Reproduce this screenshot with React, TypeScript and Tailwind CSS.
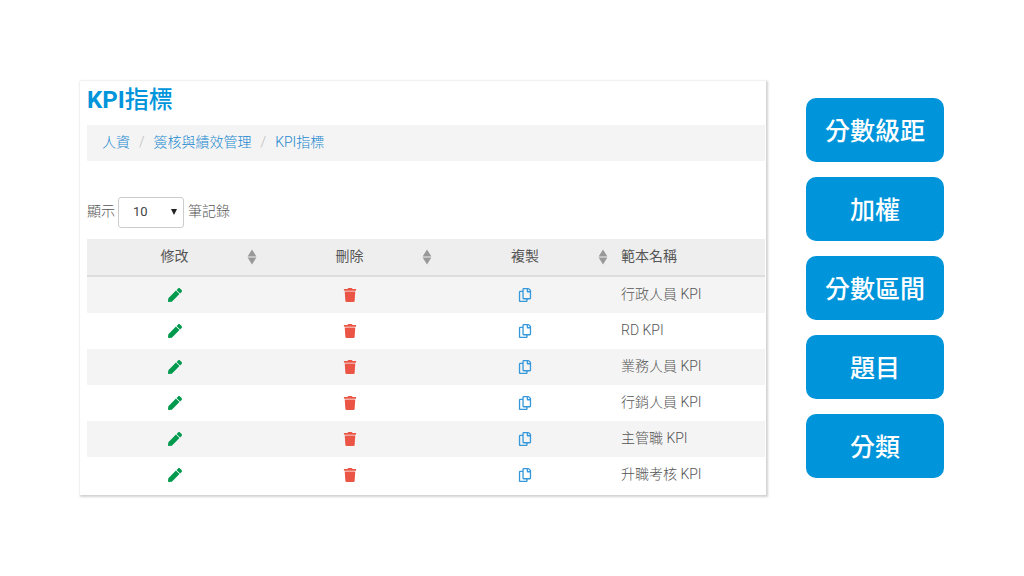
import React from "react";
import { FaPen, FaTrash, FaRegCopy } from "react-icons/fa";

const rows = ["行政人員 KPI", "RD KPI", "業務人員 KPI", "行銷人員 KPI", "主管職 KPI", "升職考核 KPI"];
const features = ["分數級距", "加權", "分數區間", "題目", "分類"];

function SortIcon() {
  return (
    <svg viewBox="0 0 10 16" className="h-4 w-2.5 fill-[#999999]" aria-hidden="true">
      <path d="M5 0.5 9.4 7.5H.6zM5 15.5 9.4 8.5H.6z" />
    </svg>
  );
}

function SortHeader({ label }: { label: string }) {
  return (
    <th scope="col" className="border-b-2 border-[#dddddd] p-0 font-normal">
      <div className="grid grid-cols-[20px_1fr_20px] items-center">
        <span className="col-start-2 pb-0.5 text-center">{label}</span>
        <button type="button" aria-label={`排序 ${label}`} className="flex justify-center">
          <SortIcon />
        </button>
      </div>
    </th>
  );
}

function Breadcrumb() {
  return (
    <nav aria-label="路徑" className="mt-2 flex h-9 items-center gap-[9px] bg-[#f4f4f4] px-[15px] pb-0.5 text-sm font-light text-[#2389d0]">
      <a href="#hr">人資</a>
      <span className="text-[#bbbbbb]">/</span>
      <a href="#performance">簽核與績效管理</a>
      <span className="text-[#bbbbbb]">/</span>
      <a href="#kpi">KPI指標</a>
    </nav>
  );
}

export default function App() {
  return (
    <main className="flex min-h-screen items-center gap-10 bg-white px-20 font-[Roboto,'Noto_Sans_CJK_TC',sans-serif] text-[#555555]">
      <section className="min-w-0 flex-1 bg-white pr-px pb-0.5 pl-[7px] shadow-[1px_1px_2px_1px_rgba(0,0,0,0.18)]">
        <h1 className="pt-1 text-2xl leading-[31px] font-medium text-[#0095db]">
          <span className="font-bold">KPI</span>指標
        </h1>
        <div className="pt-px">
          <Breadcrumb />
        </div>
        <div className="mt-9 flex items-center gap-[3px] text-sm font-light">
          <label htmlFor="page-size" className="pb-1">顯示</label>
          <div className="relative">
            <select
              id="page-size"
              defaultValue="10"
              className="block h-[31px] w-[66px] appearance-none rounded-[3px] border border-[#cccccc] bg-white pl-3.5 text-[13px] font-normal text-[#444444]"
            >
              <option>10</option>
              <option>25</option>
              <option>50</option>
            </select>
            <svg viewBox="0 0 6 6" className="pointer-events-none absolute top-3 right-[7px] size-1.5 fill-[#222222]" aria-hidden="true">
              <path d="M0 0h6L3 6z" />
            </svg>
          </div>
          <span className="pb-1 pl-px">筆記錄</span>
        </div>
        <table className="mt-[11px] w-full table-fixed border-separate border-spacing-0 text-sm">
          <colgroup>
            <col className="w-[175px]" />
            <col className="w-[175px]" />
            <col className="w-[176px]" />
            <col />
          </colgroup>
          <thead>
            <tr className="h-[38px] bg-[#eeeeee]">
              <SortHeader label="修改" />
              <SortHeader label="刪除" />
              <SortHeader label="複製" />
              <th scope="col" className="border-b-2 border-[#dddddd] pt-0 pb-0.5 pl-2 text-left font-normal">範本名稱</th>
            </tr>
          </thead>
          <tbody className="font-light">
            {rows.map((name) => (
              <tr key={name} className="h-9 odd:bg-[#f4f4f4]">
                <td className="p-0">
                  <button type="button" aria-label={`修改 ${name}`} className="mx-auto block text-[#009a4e]">
                    <FaPen size={14} />
                  </button>
                </td>
                <td className="p-0">
                  <button type="button" aria-label={`刪除 ${name}`} className="mx-auto block text-[#eb5545]">
                    <FaTrash size={14} />
                  </button>
                </td>
                <td className="p-0">
                  <button type="button" aria-label={`複製 ${name}`} className="mx-auto block text-[#3498db]">
                    <FaRegCopy size={14} />
                  </button>
                </td>
                <td className="pt-0 pb-0.5 pl-2">{name}</td>
              </tr>
            ))}
          </tbody>
        </table>
      </section>
      <nav aria-label="功能" className="flex w-[138px] shrink-0 flex-col gap-[15px]">
        {features.map((label) => (
          <button key={label} type="button" className="h-16 rounded-[10px] bg-[#0095db] pt-[3px] text-[25px] font-medium text-white">
            {label}
          </button>
        ))}
      </nav>
    </main>
  );
}
